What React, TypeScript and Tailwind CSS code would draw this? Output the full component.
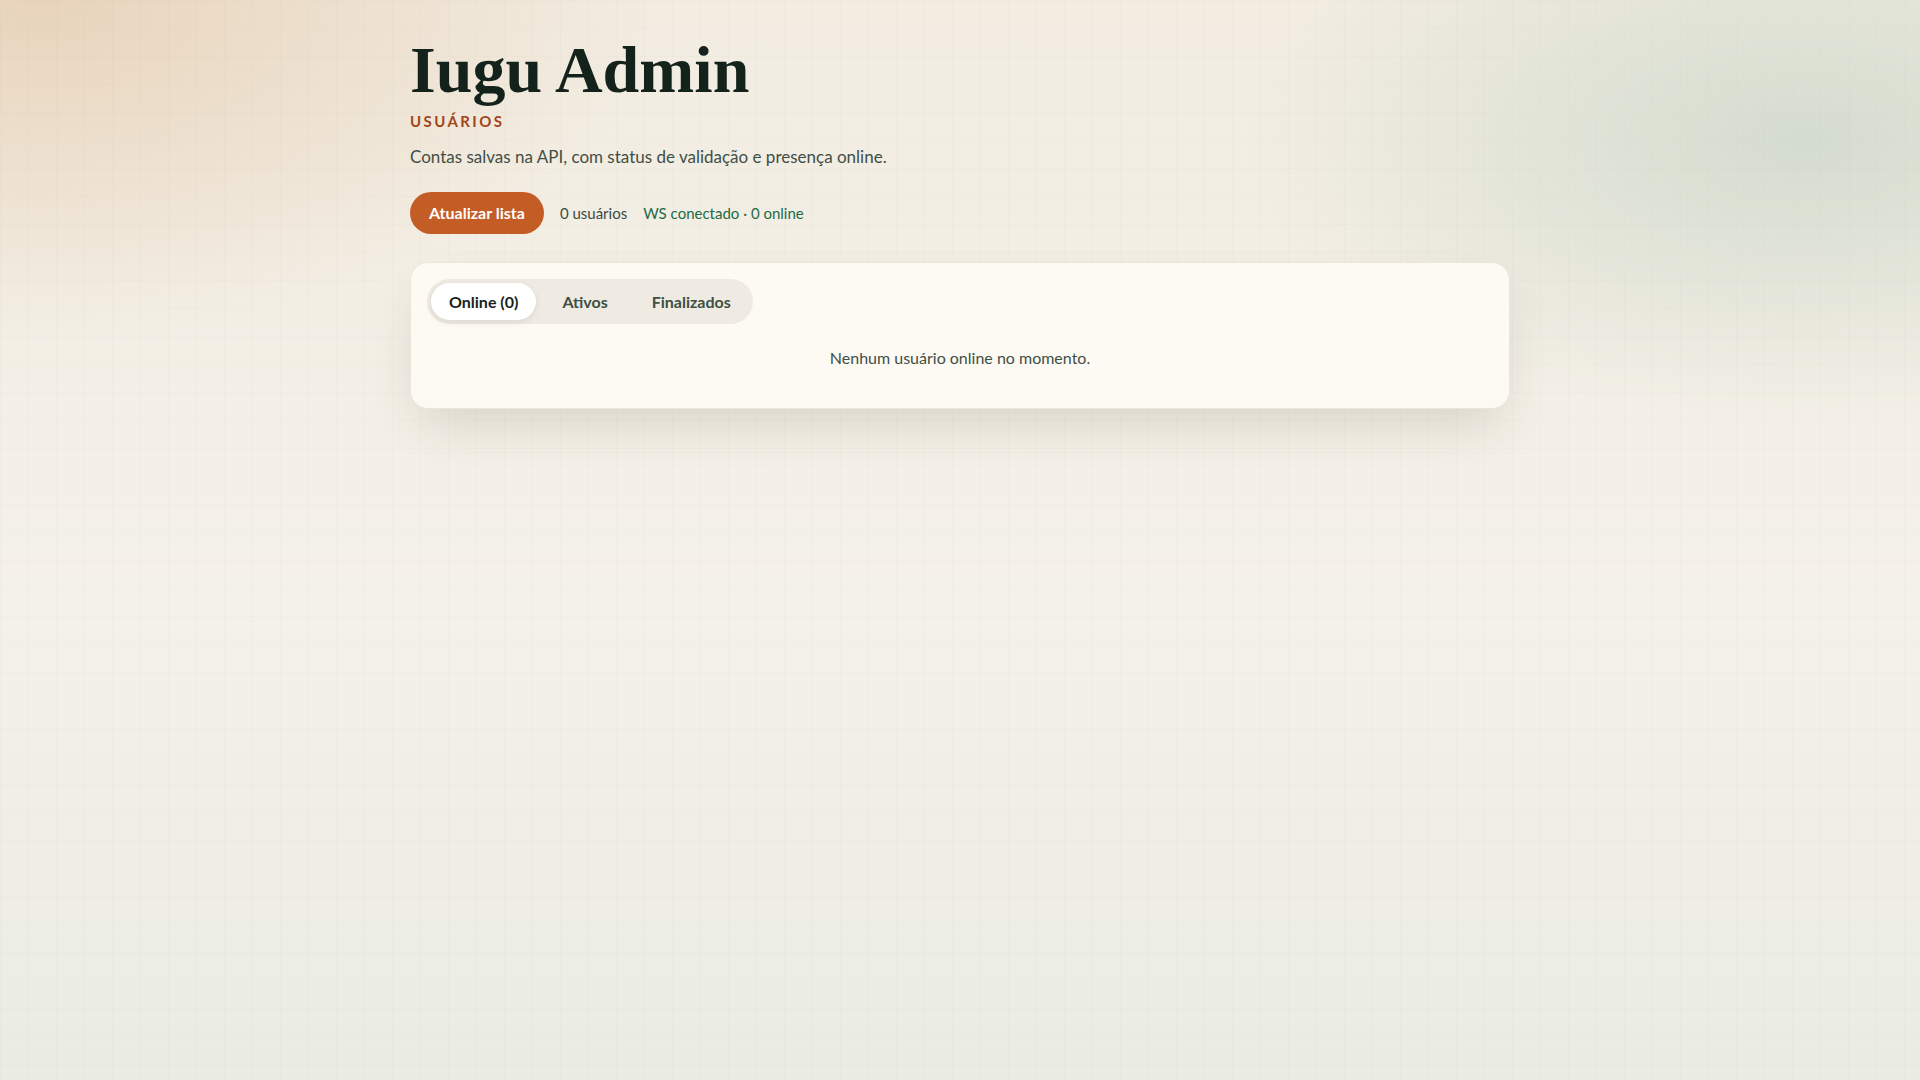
import { useState } from "react";

type Tab = "online" | "ativos" | "finalizados";

const tabs: { id: Tab; label: (n: number) => string }[] = [
  { id: "online", label: (n) => `Online (${n})` },
  { id: "ativos", label: () => "Ativos" },
  { id: "finalizados", label: () => "Finalizados" },
];

const emptyText: Record<Tab, string> = {
  online: "Nenhum usuário online no momento.",
  ativos: "Nenhum usuário ativo.",
  finalizados: "Nenhum usuário finalizado.",
};

function App() {
  const [tab, setTab] = useState<Tab>("online");
  const users: string[] = [];
  const onlineCount = 0;

  return (
    <main className="relative min-h-screen overflow-hidden bg-[#f2eee6] font-['Lato',sans-serif] text-[#13221b]">
      {/* soft glows behind the grid */}
      <div className="pointer-events-none absolute inset-0 bg-[radial-gradient(ellipse_620px_340px_at_2%_0%,#e8d4bc_0%,rgba(232,212,188,0)_100%),radial-gradient(ellipse_560px_280px_at_94%_13%,#d4dccf_0%,rgba(212,220,207,0)_100%),linear-gradient(to_bottom,#f2ece1_0%,#f4f1e9_55%,#eaece3_100%)]" />
      <div className="pointer-events-none absolute inset-0 bg-[linear-gradient(to_right,rgba(90,80,50,0.02)_1px,transparent_1px),linear-gradient(to_bottom,rgba(90,80,50,0.02)_1px,transparent_1px)] bg-[size:28px_28px]" />

      <div className="relative mx-auto w-[1100px] pt-[37px]">
        <h1 className="font-['Liberation_Serif',serif] text-[66px] leading-none font-bold text-[#13221b]">
          Iugu Admin
        </h1>
        <p className="mt-2 text-[15px] leading-5 font-bold tracking-[0.16em] text-[#a3441b]">
          USUÁRIOS
        </p>
        <p className="mt-[14px] text-[17px] leading-6 text-[#3f4f46]">
          Contas salvas na API, com status de validação e presença online.
        </p>

        <div className="mt-[23px] flex items-center gap-4">
          <button
            type="button"
            className="h-[42px] rounded-full bg-[#c45c26] px-[19px] text-[16px] font-bold text-white"
          >
            Atualizar lista
          </button>
          <span className="text-[15px] text-[#3b4a42]">{users.length} usuários</span>
          <span className="text-[15px] text-[#1f6b45]">WS conectado · {onlineCount} online</span>
        </div>

        <section className="mt-7 rounded-[18px] border border-[#ece6da] bg-[#fdfaf3] p-4 shadow-[0_24px_50px_-12px_rgba(60,55,35,0.16)]">
          <div className="inline-flex gap-2 rounded-full bg-[#efebe3] p-1">
            {tabs.map((t) => (
              <button
                key={t.id}
                type="button"
                onClick={() => setTab(t.id)}
                className={
                  tab === t.id
                    ? "h-[37px] rounded-full bg-white px-[18px] text-[16px] font-bold text-[#16241c] shadow-[0_2px_6px_rgba(40,40,20,0.1)]"
                    : "h-[37px] rounded-full px-[18px] text-[16px] font-bold text-[#3d5044]"
                }
              >
                {t.label(onlineCount)}
              </button>
            ))}
          </div>
          <p className="py-6 text-center text-[16px] leading-5 text-[#3f4f46]">{emptyText[tab]}</p>
        </section>
      </div>
    </main>
  );
}

export default App;
